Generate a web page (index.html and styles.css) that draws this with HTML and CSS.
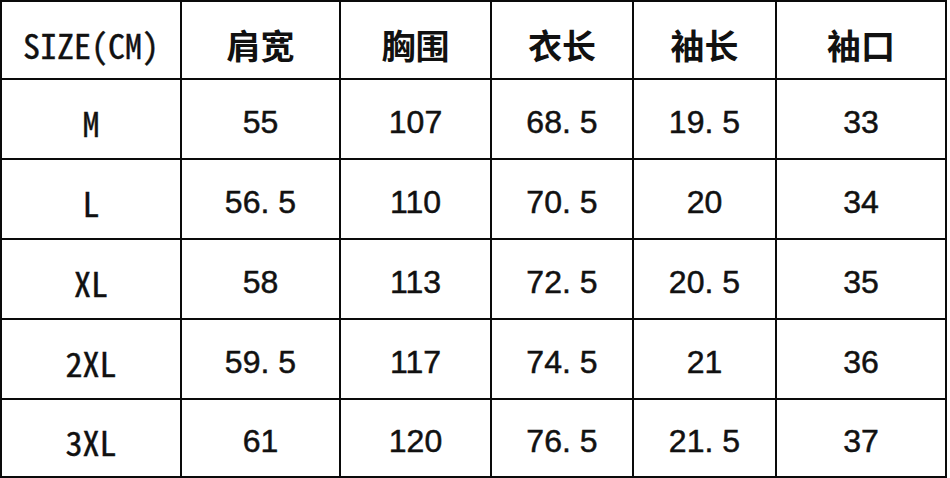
FILE: index.html
```html
<!DOCTYPE html>
<html lang="zh">
<head>
<meta charset="utf-8">
<title>尺码表</title>
<link rel="stylesheet" href="styles.css">
</head>
<body>
<div class="sheet">
  <div class="cell head mono">SIZE(CM)</div>
  <div class="cell head cjk">肩宽</div>
  <div class="cell head cjk">胸围</div>
  <div class="cell head cjk">衣长</div>
  <div class="cell head cjk">袖长</div>
  <div class="cell head cjk">袖口</div>

  <div class="cell mono">M</div>
  <div class="cell num">55</div>
  <div class="cell num">107</div>
  <div class="cell num">68<span class="dot">.</span>5</div>
  <div class="cell num">19<span class="dot">.</span>5</div>
  <div class="cell num">33</div>

  <div class="cell mono">L</div>
  <div class="cell num">56<span class="dot">.</span>5</div>
  <div class="cell num">110</div>
  <div class="cell num">70<span class="dot">.</span>5</div>
  <div class="cell num">20</div>
  <div class="cell num">34</div>

  <div class="cell mono">XL</div>
  <div class="cell num">58</div>
  <div class="cell num">113</div>
  <div class="cell num">72<span class="dot">.</span>5</div>
  <div class="cell num">20<span class="dot">.</span>5</div>
  <div class="cell num">35</div>

  <div class="cell mono">2XL</div>
  <div class="cell num">59<span class="dot">.</span>5</div>
  <div class="cell num">117</div>
  <div class="cell num">74<span class="dot">.</span>5</div>
  <div class="cell num">21</div>
  <div class="cell num">36</div>

  <div class="cell mono">3XL</div>
  <div class="cell num">61</div>
  <div class="cell num">120</div>
  <div class="cell num">76<span class="dot">.</span>5</div>
  <div class="cell num">21<span class="dot">.</span>5</div>
  <div class="cell num">37</div>
</div>
</body>
</html>
```
FILE: styles.css
```css
html, body {
  margin: 0;
  padding: 0;
  background: #ffffff;
}

body {
  width: 950px;
  height: 478px;
  overflow: hidden;
}

.sheet {
  display: grid;
  grid-template-columns: 178px 157px 149px 140px 141px 168px;
  grid-template-rows: 76px 78px 78px 78px 78px 76px;
  gap: 2px;
  padding: 2px;
  width: max-content;
  background: #0a0a0a;
}

.cell {
  background: #ffffff;
  display: flex;
  align-items: center;
  justify-content: center;
  color: #111111;
  padding-top: 6px;
  box-sizing: border-box;
}

.head {
  padding-top: 8px;
}

.cjk {
  font-family: "Noto Sans CJK SC", sans-serif;
  font-size: 34px;
  font-weight: 700;
}

.mono {
  font-family: "Noto Sans Mono CJK SC", "Liberation Mono", monospace;
  font-size: 34px;
  -webkit-text-stroke: 0.4px #111111;
}

.num {
  font-family: "Liberation Sans", Arial, sans-serif;
  font-size: 32px;
  -webkit-text-stroke: 0.5px #111111;
}

.dot {
  margin-right: 9px;
}
```
